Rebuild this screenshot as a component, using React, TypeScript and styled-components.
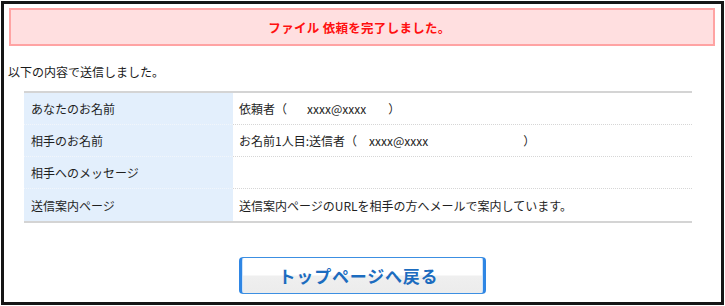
import React from "react";
import styled, { createGlobalStyle } from "styled-components";

const GlobalStyle = createGlobalStyle`
  html, body { margin: 0; padding: 0; background: #ffffff; }
  body {
    font-family: "Noto Sans CJK JP", "Noto Sans", sans-serif;
    font-size: 12px;
    color: #222222;
  }
`;

const Frame = styled.div`
  box-sizing: border-box;
  margin: 1px;
  width: 723px;
  height: 304px;
  border: 3px solid #161616;
  padding: 4px 6px 0 5px;
  display: flex;
  flex-direction: column;
`;

const Notice = styled.div`
  box-sizing: border-box;
  height: 38px;
  border: 2px solid #ffa3a3;
  background: #ffdfe0;
  display: flex;
  align-items: center;
  justify-content: center;
  color: #ff1010;
  font-weight: 700;
  font-size: 12.5px;
  letter-spacing: 0.3px;
  padding-right: 5px;
`;

const Lead = styled.p`
  margin: 16px 0 0 -1px;
  line-height: 20px;
  font-size: 12px;
  color: #1a1a1a;
`;

const Table = styled.div`
  margin: 9px 0 0 15px;
  width: 668px;
  border-top: 2px solid #d4d4d4;
  border-bottom: 2px solid #d4d4d4;
  display: grid;
  grid-template-columns: 209px 1fr;
`;

const Cell = styled.div<{ $label?: boolean; $last?: boolean }>`
  box-sizing: border-box;
  height: 32px;
  display: flex;
  align-items: center;
  padding-left: ${(p) => (p.$label ? "7px" : "6px")};
  background: ${(p) => (p.$label ? "#e3effc" : "#ffffff")};
  border-bottom: ${(p) =>
    p.$last ? "none" : p.$label ? "1px dotted #f2f6fb" : "1px dotted #d6d6d6"};
  color: #1f1f1f;
  white-space: pre;
`;

const Gap = styled.span<{ $w: number }>`
  display: inline-block;
  width: ${(p) => p.$w}px;
`;

const Footer = styled.div`
  margin-top: 34px;
  display: flex;
  justify-content: center;
  padding-left: 1px;
`;

const BackButton = styled.button`
  box-sizing: border-box;
  width: 247px;
  height: 37px;
  border: 1px solid #3c8fe2;
  border-left: 3px solid #2f86e4;
  border-right: 3px solid #2f86e4;
  border-radius: 4px;
  background: linear-gradient(
    to bottom,
    #ffffff 0%,
    #ffffff 48%,
    #efefef 52%,
    #ececec 100%
  );
  box-shadow: inset 1px 0 0 #cfe4fa, inset -1px 0 0 #cfe4fa;
  font-family: "Noto Sans CJK JP", "Noto Sans", sans-serif;
  font-size: 17px;
  font-weight: 700;
  color: #1c6cbf;
  letter-spacing: 0.8px;
  padding: 0 8px 1px 0;
  cursor: pointer;
`;

type Row = { label: string; value: React.ReactNode };

const rows: Row[] = [
  {
    label: "あなたのお名前",
    value: (
      <>
        依頼者（<Gap $w={20} />xxxx@xxxx<Gap $w={22} />）
      </>
    ),
  },
  {
    label: "相手のお名前",
    value: (
      <>
        お名前1人目:送信者（<Gap $w={12} />xxxx@xxxx<Gap $w={95} />）
      </>
    ),
  },
  { label: "相手へのメッセージ", value: "" },
  {
    label: "送信案内ページ",
    value: "送信案内ページのURLを相手の方へメールで案内しています。",
  },
];

export default function App() {
  return (
    <>
      <GlobalStyle />
      <Frame>
        <Notice>ファイル 依頼を完了しました。</Notice>
        <Lead>以下の内容で送信しました。</Lead>
        <Table>
          {rows.map((r, i) => (
            <React.Fragment key={r.label}>
              <Cell $label $last={i === rows.length - 1}>
                {r.label}
              </Cell>
              <Cell $last={i === rows.length - 1}>{r.value}</Cell>
            </React.Fragment>
          ))}
        </Table>
        <Footer>
          <BackButton type="button">トップページへ戻る</BackButton>
        </Footer>
      </Frame>
    </>
  );
}
